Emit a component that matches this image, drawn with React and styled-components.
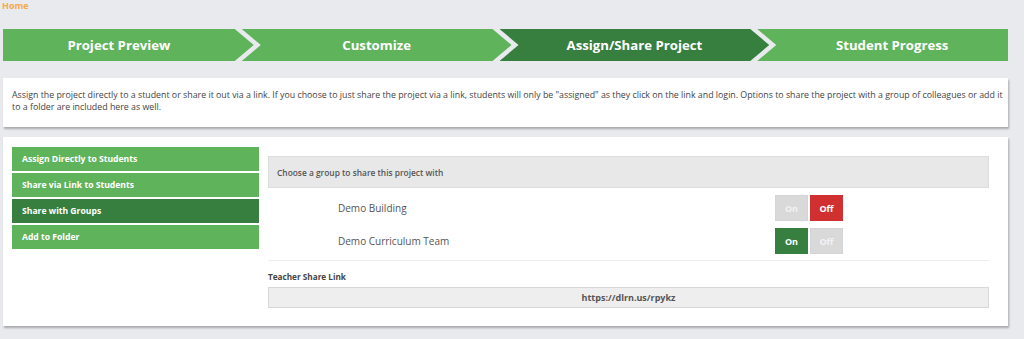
import React from "react";
import styled, { createGlobalStyle } from "styled-components";

const GlobalStyle = createGlobalStyle`
  html, body {
    margin: 0;
    padding: 0;
    background: #e9eaee;
    font-family: "Open Sans", "Liberation Sans", sans-serif;
    color: #555;
  }
  * { box-sizing: border-box; }
`;

const Page = styled.div`
  width: 1024px;
  height: 339px;
  padding: 0 16px 0 3px;
  overflow: hidden;
`;

const Crumb = styled.a`
  display: block;
  margin-left: -1px;
  height: 29px;
  font-size: 9px;
  line-height: 12px;
  font-weight: 700;
  color: #f5a94c;
  text-decoration: none;
`;

const Stepper = styled.div`
  display: flex;
  height: 32px;
`;

const ARROW = 19;

const Step = styled.div`
  flex: 1;
  display: flex;
  align-items: center;
  justify-content: center;
  margin-left: ${(p) => (p.$first ? 0 : -12)}px;
  padding-left: ${(p) => (p.$first ? 0 : ARROW)}px;
  padding-right: ${(p) => (p.$last ? 0 : ARROW)}px;
  background: ${(p) => (p.$active ? "#367f3e" : "#5fb35b")};
  color: #fff;
  font-size: 13.2px;
  font-weight: 700;
  clip-path: ${(p) =>
    `polygon(0 0, ${p.$last ? "100%" : `calc(100% - ${ARROW}px)`} 0, 100% 50%, ${
      p.$last ? "100%" : `calc(100% - ${ARROW}px)`
    } 100%, 0 100%, ${p.$first ? "0" : `${ARROW}px`} 50%)`};
`;

const Card = styled.div`
  background: #fff;
  box-shadow: 1px 2px 2px rgba(0, 0, 0, 0.28);
`;

const Intro = styled(Card)`
  margin-top: 17px;
  height: 49px;
  padding: 11px 4px 11px 9px;
  font-size: 8.82px;
  line-height: 12px;
  color: #444;
`;

const Main = styled(Card)`
  margin-top: 10px;
  height: 189px;
  padding: 10px 19px 0 9px;
  display: grid;
  grid-template-columns: 247px 1fr;
  column-gap: 9px;
  align-items: start;
`;

const Menu = styled.div`
  display: flex;
  flex-direction: column;
  gap: 2px;
`;

const MenuItem = styled.div`
  height: 24px;
  display: flex;
  align-items: center;
  padding-left: 10px;
  background: ${(p) => (p.$active ? "#367f3e" : "#5fb35b")};
  color: #fff;
  font-size: 8.6px;
  font-weight: 700;
`;

const Panel = styled.div`
  padding-top: 9px;
  display: flex;
  flex-direction: column;
`;

const PanelHead = styled.div`
  height: 32px;
  display: flex;
  align-items: center;
  padding-left: 8px;
  background: #e8e8e8;
  border: 1px solid #ddd;
  font-size: 8.4px;
  font-weight: 600;
  color: #555;
`;

const Groups = styled.div`
  display: flex;
  flex-direction: column;
  gap: 7px;
  padding: 7px 0 6px;
  border-bottom: 1px solid #eee;
`;

const GroupRow = styled.div`
  display: grid;
  grid-template-columns: 1fr auto;
  align-items: center;
  padding-left: 70px;
  padding-right: 145px;
  height: 26px;
`;

const GroupName = styled.span`
  font-size: 10px;
  color: #555;
`;

const Toggle = styled.div`
  display: flex;
  gap: 2px;
  margin-right: 1px;
`;

const ToggleBtn = styled.button`
  width: 33px;
  height: 26px;
  border: 1px solid ${(p) => (p.$on ? p.$color : "#d4d4d4")};
  background: ${(p) => (p.$on ? p.$color : "#d9d9d9")};
  color: ${(p) => (p.$on ? "#fff" : "#f2f2f2")};
  font-family: inherit;
  font-size: 9px;
  font-weight: 700;
  padding: 0;
  cursor: pointer;
`;

const LinkLabel = styled.div`
  margin-top: 10px;
  font-size: 8.2px;
  font-weight: 700;
  color: #444;
  line-height: 12px;
`;

const LinkBox = styled.div`
  margin-top: 4px;
  height: 21px;
  display: flex;
  align-items: center;
  justify-content: center;
  background: #eee;
  border: 1px solid #d8d8d8;
  font-size: 9px;
  font-weight: 700;
  color: #555;
`;

const steps = ["Project Preview", "Customize", "Assign/Share Project", "Student Progress"];
const menu = [
  "Assign Directly to Students",
  "Share via Link to Students",
  "Share with Groups",
  "Add to Folder",
];
const groups = [
  { name: "Demo Building", on: false },
  { name: "Demo Curriculum Team", on: true },
];

export default function App() {
  return (
    <Page>
      <GlobalStyle />
      <Crumb href="#">Home</Crumb>
      <Stepper>
        {steps.map((s, i) => (
          <Step key={s} $first={i === 0} $last={i === steps.length - 1} $active={i === 2}>
            {s}
          </Step>
        ))}
      </Stepper>
      <Intro>
        Assign the project directly to a student or share it out via a link. If you choose to just
        share the project via a link, students will only be "assigned" as they click on the link and
        login. Options to share the project with a group of colleagues or add it to a folder are
        included here as well.
      </Intro>
      <Main>
        <Menu>
          {menu.map((m) => (
            <MenuItem key={m} $active={m === "Share with Groups"}>
              {m}
            </MenuItem>
          ))}
        </Menu>
        <Panel>
          <PanelHead>Choose a group to share this project with</PanelHead>
          <Groups>
            {groups.map((g) => (
              <GroupRow key={g.name}>
                <GroupName>{g.name}</GroupName>
                <Toggle>
                  <ToggleBtn $on={g.on} $color="#367f3e">On</ToggleBtn>
                  <ToggleBtn $on={!g.on} $color="#d03130">Off</ToggleBtn>
                </Toggle>
              </GroupRow>
            ))}
          </Groups>
          <LinkLabel>Teacher Share Link</LinkLabel>
          <LinkBox>https://dlrn.us/rpykz</LinkBox>
        </Panel>
      </Main>
    </Page>
  );
}
